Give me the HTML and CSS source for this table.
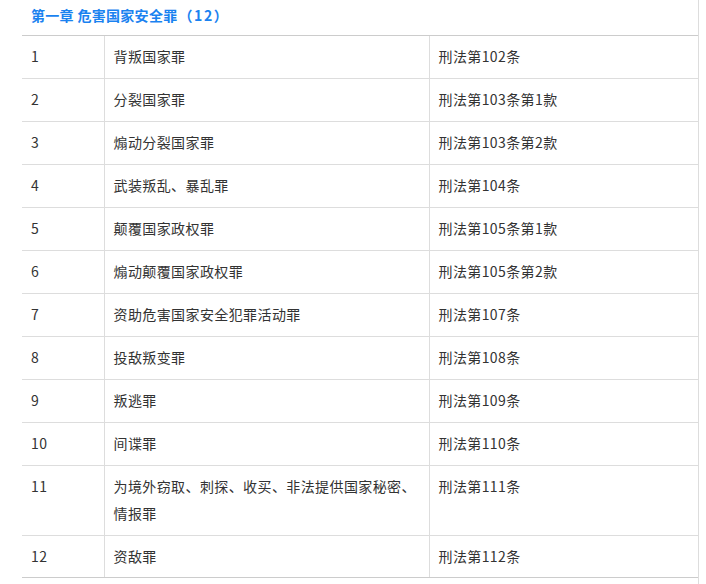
FILE: index.html
```html
<!DOCTYPE html>
<html lang="zh-CN">
<head>
<meta charset="utf-8">
<link rel="stylesheet" href="styles.css">
</head>
<body>
<div class="page">
  <div class="chapter">第一章 危害国家安全罪<span class="count">（12）</span></div>
  <table class="crimes">
    <colgroup><col class="c1"><col class="c2"><col class="c3"></colgroup>
    <tr><td>1</td><td>背叛国家罪</td><td>刑法第102条</td></tr>
    <tr><td>2</td><td>分裂国家罪</td><td>刑法第103条第1款</td></tr>
    <tr><td>3</td><td>煽动分裂国家罪</td><td>刑法第103条第2款</td></tr>
    <tr><td>4</td><td>武装叛乱、暴乱罪</td><td>刑法第104条</td></tr>
    <tr><td>5</td><td>颠覆国家政权罪</td><td>刑法第105条第1款</td></tr>
    <tr><td>6</td><td>煽动颠覆国家政权罪</td><td>刑法第105条第2款</td></tr>
    <tr><td>7</td><td>资助危害国家安全犯罪活动罪</td><td>刑法第107条</td></tr>
    <tr><td>8</td><td>投敌叛变罪</td><td>刑法第108条</td></tr>
    <tr><td>9</td><td>叛逃罪</td><td>刑法第109条</td></tr>
    <tr><td>10</td><td>间谍罪</td><td>刑法第110条</td></tr>
    <tr><td>11</td><td>为境外窃取、刺探、收买、非法提供国家秘密、情报罪</td><td>刑法第111条</td></tr>
    <tr class="last"><td>12</td><td>资敌罪</td><td>刑法第112条</td></tr>
  </table>
</div>
</body>
</html>
```
FILE: styles.css
```css
html, body {
  margin: 0;
  padding: 0;
  background: #fff;
}
body {
  font-family: "Noto Sans CJK SC", "Microsoft YaHei", sans-serif;
  color: #333;
}
.page {
  width: 676px;
  min-height: 584px;
  padding-left: 22px;
  border-right: 1px solid #ddd;
}
.chapter {
  height: 35px;
  line-height: 31px;
  padding-left: 9px;
  font-size: 14px;
  font-weight: bold;
  color: #1a82f0;
  letter-spacing: 0.3px;
}
.count {
  letter-spacing: 1.6px;
  padding-left: 1px;
}
.crimes {
  width: 676px;
  border-collapse: collapse;
  table-layout: fixed;
  font-size: 14px;
  letter-spacing: 0.4px;
}
.c1 { width: 82px; }
.c2 { width: 325px; }
.c3 { width: 269px; }
.crimes td {
  border-top: 1px solid #ddd;
  border-left: 1px solid #ddd;
  padding: 7px 9px 8px;
  line-height: 27px;
  vertical-align: top;
}
.crimes tr:first-child td { border-top-color: #ccc; }
.crimes td:first-child { border-left: none; }
.crimes tr.last td {
  border-bottom: 1px solid #ccc;
  padding-bottom: 7px;
}
```
